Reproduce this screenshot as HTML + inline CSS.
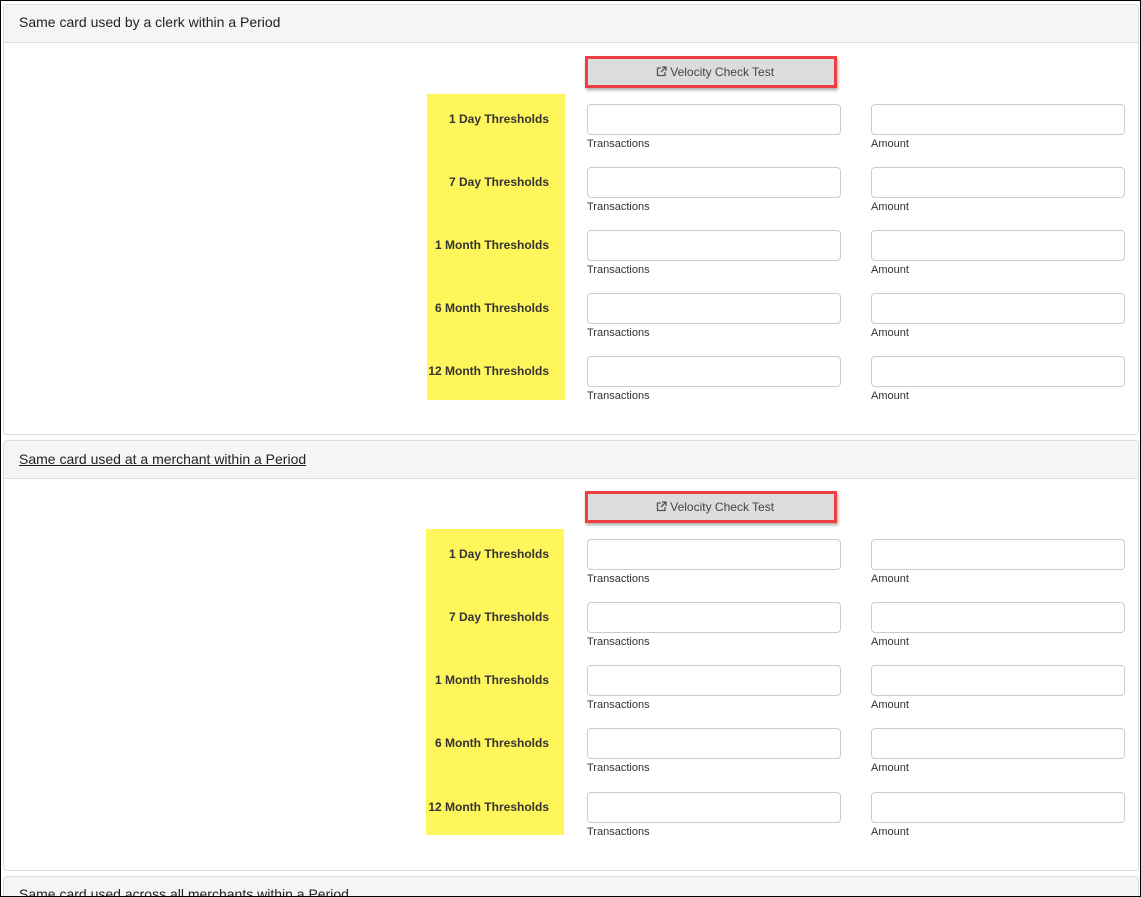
<!DOCTYPE html>
<html><head><meta charset="utf-8"><style>
*{box-sizing:border-box;margin:0;padding:0}
html,body{width:1141px;height:897px;overflow:hidden;background:#fff;font-family:"Liberation Sans",Arial,sans-serif;position:relative}
.frame{position:absolute;left:0;top:0;width:1141px;height:897px;border:1px solid #000;z-index:5;pointer-events:none}
.panel{position:absolute;left:3px;width:1136px;border:1px solid #ddd;border-radius:4px;background:#fff;overflow:hidden}
.hd{height:38px;background:#f5f5f5;border-bottom:1px solid #ddd;font-size:14px;color:#222;padding:9px 15px}
.btnwrap{position:absolute;width:252px;height:32px;border:3px solid #ee3f43;box-shadow:1px 2px 3px rgba(0,0,0,.35)}
.btn{width:100%;height:100%;background:#dcdcdc;font-size:12px;color:#444;text-align:center;line-height:27px;padding-left:8px}
.yel{position:absolute;width:138px;height:306px;background:#fef65b}
.lbl{position:absolute;width:122px;text-align:right;font-size:12px;font-weight:bold;color:#333}
.inp{position:absolute;width:254px;height:31px;border:1px solid #ccc;border-radius:4px}
.sm{position:absolute;font-size:11px;color:#333}
</style></head><body>
<div class="frame"></div>
<div class="panel" style="top:4px;height:431px"><div class="hd">Same card used by a clerk within a Period</div></div>
<div class="panel" style="top:440px;height:431px"><div class="hd" style="padding-top:10px"><u>Same card used at a merchant within a Period</u></div></div>
<div class="panel" style="top:876px;height:30px"><div class="hd" style="padding-top:9px">Same card used across all merchants within a Period</div></div>

<div class="btnwrap" style="left:585px;top:56px"><div class="btn"><svg width="11" height="11" viewBox="0 0 11 11" style="vertical-align:-1px"><path d="M5 2H1.5v7.5H9V6" fill="none" stroke="#555" stroke-width="1.3"/><path d="M6 1h4v4M10 1L5 6" fill="none" stroke="#555" stroke-width="1.3"/></svg> Velocity Check Test</div></div>
<div class="btnwrap" style="left:585px;top:491px"><div class="btn"><svg width="11" height="11" viewBox="0 0 11 11" style="vertical-align:-1px"><path d="M5 2H1.5v7.5H9V6" fill="none" stroke="#555" stroke-width="1.3"/><path d="M6 1h4v4M10 1L5 6" fill="none" stroke="#555" stroke-width="1.3"/></svg> Velocity Check Test</div></div>

<div class="yel" style="left:427px;top:94px"></div>
<div class="yel" style="left:426px;top:529px"></div>

<div id="rows"></div>
<script>
var labels=["1 Day Thresholds","7 Day Thresholds","1 Month Thresholds","6 Month Thresholds","12 Month Thresholds"];
var tops=[[104,167,230,293,356],[539,602,665,728,792]];
var h="";
tops.forEach(function(set){set.forEach(function(t,i){
h+='<div class="lbl" style="left:427px;top:'+(t+8)+'px">'+labels[i]+'</div>';
h+='<div class="inp" style="left:587px;top:'+t+'px"></div>';
h+='<div class="inp" style="left:871px;top:'+t+'px"></div>';
h+='<div class="sm" style="left:587px;top:'+(t+34)+'px">Transactions</div>';
h+='<div class="sm" style="left:871px;top:'+(t+34)+'px">Amount</div>';
});});
document.getElementById("rows").innerHTML=h;
</script>
</body></html>
